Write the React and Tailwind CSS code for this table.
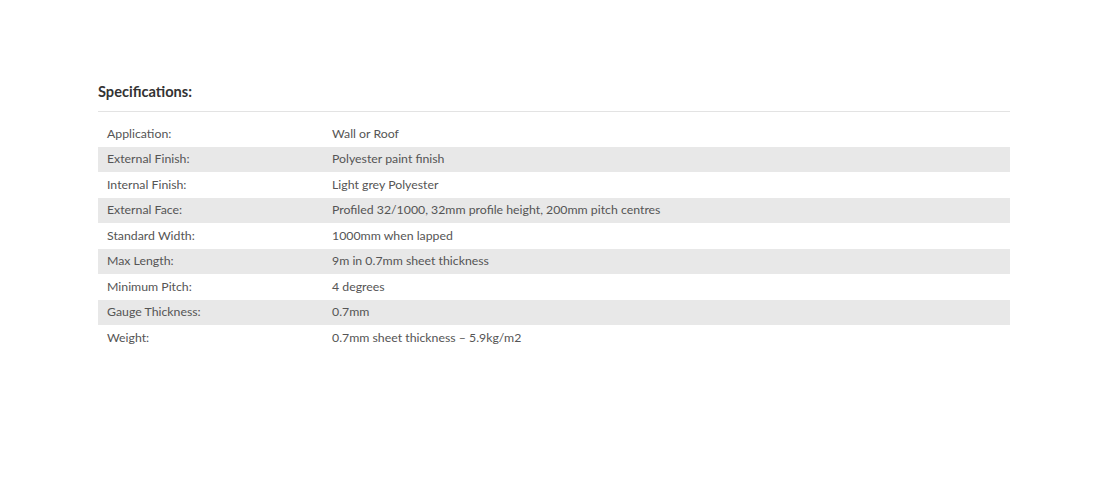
const specs = [
  ["Application:", "Wall or Roof"],
  ["External Finish:", "Polyester paint finish"],
  ["Internal Finish:", "Light grey Polyester"],
  ["External Face:", "Profiled 32/1000, 32mm profile height, 200mm pitch centres"],
  ["Standard Width:", "1000mm when lapped"],
  ["Max Length:", "9m in 0.7mm sheet thickness"],
  ["Minimum Pitch:", "4 degrees"],
  ["Gauge Thickness:", "0.7mm"],
  ["Weight:", "0.7mm sheet thickness – 5.9kg/m2"],
];

export default function App() {
  return (
    <main className="min-h-[491px] bg-white pt-[82px] font-['Lato','Open_Sans',sans-serif]">
      <div className="ml-[98px] w-[912px]">
        <h2 className="text-[14.6px] leading-[20px] font-bold text-[#333]">Specifications:</h2>
        <div className="mt-[9px] border-t border-[#e3e3e3]" />
        <div className="mt-[9px]">
          {specs.map(([label, value], i) => (
            <div
              key={label}
              className={`flex h-[25.5px] items-center text-[12.3px] text-[#555] ${i % 2 === 1 ? "bg-[#e8e8e8]" : "bg-white"}`}
            >
              <div className="w-[234px] pl-[9px]">{label}</div>
              <div>{value}</div>
            </div>
          ))}
        </div>
      </div>
    </main>
  );
}
